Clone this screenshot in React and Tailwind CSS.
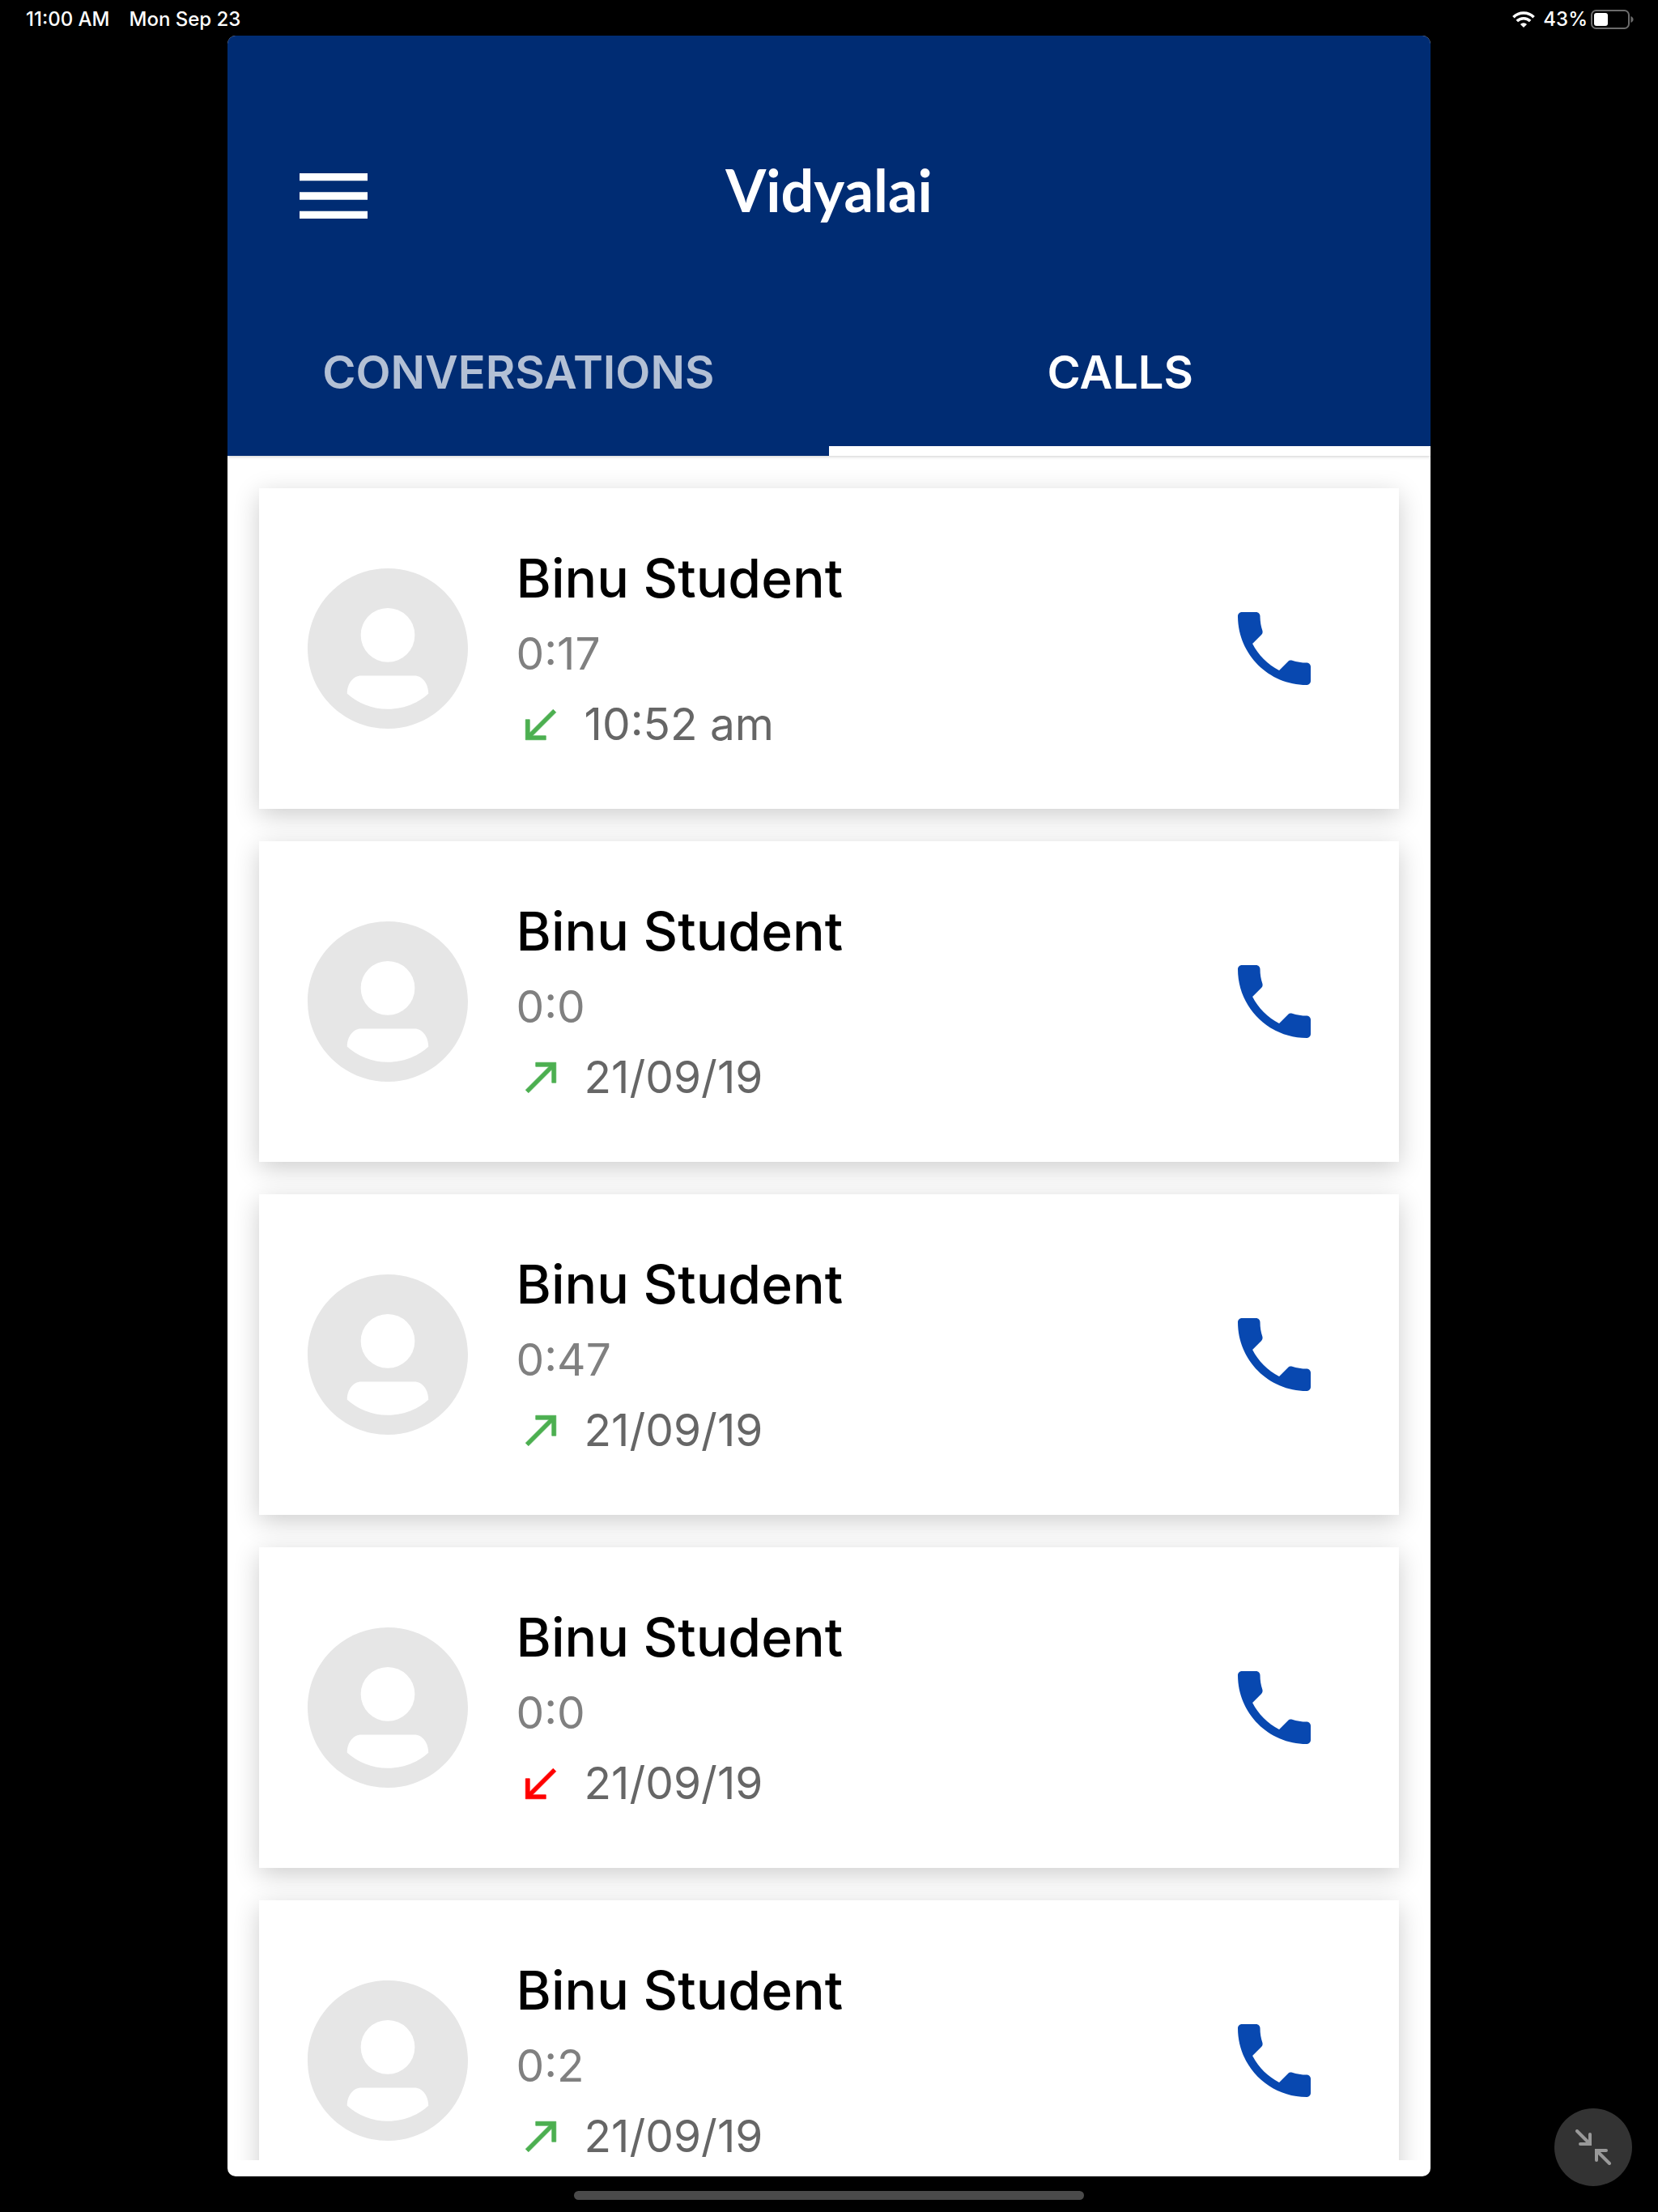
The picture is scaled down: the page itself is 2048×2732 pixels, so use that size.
import { useState } from 'react'

const CALLS = [
  { id: 1, name: 'Binu Student', duration: '0:17', when: '10:52 am', type: 'incoming' },
  { id: 2, name: 'Binu Student', duration: '0:0',  when: '21/09/19', type: 'outgoing' },
  { id: 3, name: 'Binu Student', duration: '0:47', when: '21/09/19', type: 'outgoing' },
  { id: 4, name: 'Binu Student', duration: '0:0',  when: '21/09/19', type: 'missed' },
  { id: 5, name: 'Binu Student', duration: '0:2',  when: '21/09/19', type: 'outgoing' },
]

const TABS = ['Conversations', 'Calls']

function WifiIcon() {
  return (
    <svg viewBox="0 0 28 20" className="w-7 h-5" fill="none" stroke="currentColor" aria-hidden="true">
      <path d="M1.4 7.2a18 18 0 0 1 25.2 0" strokeWidth="3.6" />
      <path d="M5.8 12a11.8 11.8 0 0 1 16.4 0" strokeWidth="3.6" />
      <path d="M14 20l-4.1-4.1a5.9 5.9 0 0 1 8.2 0z" fill="currentColor" stroke="none" />
    </svg>
  )
}

function BatteryIcon() {
  return (
    <svg viewBox="0 0 53 24" className="w-[53px] h-6" aria-hidden="true">
      <rect x="1" y="1" width="46" height="22" rx="5.5" fill="none" stroke="#6b6b6b" strokeWidth="2" />
      <rect x="4" y="4" width="17" height="16" rx="3" fill="#fff" />
      <path d="M49.4 8c4.2 1.6 4.2 6.4 0 8z" fill="#6b6b6b" />
    </svg>
  )
}

function MenuIcon() {
  return (
    <svg viewBox="0 0 24 24" className="w-28 h-28" fill="currentColor" aria-hidden="true">
      <path d="M3 18h18v-2H3v2zm0-5h18v-2H3v2zm0-7v2h18V6H3z" />
    </svg>
  )
}

function Avatar() {
  return (
    <svg viewBox="2 2 20 20" className="w-[198px] h-[198px] flex-shrink-0 text-[#e6e6e6]" fill="currentColor" aria-hidden="true">
      <path d="M12 2C6.48 2 2 6.48 2 12s4.48 10 10 10 10-4.48 10-10S17.52 2 12 2zm0 4.95a3.37 3.37 0 1 1 0 6.74 3.37 3.37 0 0 1 0-6.74zm0 12.6c-2 0-3.8-.76-5.07-1.92 0-1.2.7-2.24 1.77-2.24h6.6c1.07 0 1.77 1.04 1.77 2.24-1.27 1.16-3.07 1.92-5.07 1.92z" />
    </svg>
  )
}

function PhoneIcon() {
  return (
    <svg viewBox="3 3 18 18" className="w-[90px] h-[90px]" fill="currentColor" aria-hidden="true">
      <path d="M6.62 10.79c1.44 2.83 3.76 5.14 6.59 6.59l2.2-2.2c.27-.27.67-.36 1.02-.24 1.12.37 2.33.57 3.57.57.55 0 1 .45 1 1V20c0 .55-.45 1-1 1-9.39 0-17-7.61-17-17 0-.55.45-1 1-1h3.5c.55 0 1 .45 1 1 0 1.25.2 2.45.57 3.57.11.35.03.74-.25 1.02l-2.2 2.2z" />
    </svg>
  )
}

function CallTypeIcon({ type }) {
  if (type === 'outgoing') return (
    <svg viewBox="-0.5 0.5 24 24" className="w-[60px] h-[60px] text-[#4caf50]" fill="currentColor" stroke="currentColor" strokeWidth="0.3" role="img" aria-label="Outgoing call">
      <path d="M9 5v2h6.59L4 18.59 5.41 20 17 8.41V15h2V5z" />
    </svg>
  )

  return (
    <svg
      viewBox="0.5 -0.5 24 24"
      className={type === 'missed' ? 'w-[60px] h-[60px] text-[#ff0000]' : 'w-[60px] h-[60px] text-[#4caf50]'}
      fill="currentColor"
      stroke="currentColor"
      strokeWidth="0.3"
      role="img"
      aria-label={type === 'missed' ? 'Missed call' : 'Incoming call'}
    >
      <path d="M20 5.41L18.59 4 7 15.59V9H5v10h10v-2H8.41z" />
    </svg>
  )
}

function StatusBar() {
  return (
    <div className="h-11 flex-shrink-0 flex items-center justify-between pl-8 pr-[30px] pt-1 text-white text-2xl font-medium">
      <div className="flex gap-6">
        <span>11:00 AM</span>
        <span>Mon Sep 23</span>
      </div>
      <div className="flex items-center">
        <WifiIcon />
        <span className="ml-2.5 mr-1">43%</span>
        <BatteryIcon />
      </div>
    </div>
  )
}

function CallCard({ call }) {
  return (
    <li className="h-[396px] flex-shrink-0 flex items-center pl-[60px] pr-[109px] bg-white shadow-[0_8px_30px_rgba(0,0,0,0.2)]">
      <Avatar />
      <div className="ml-[60px] flex-1 min-w-0">
        <p className="text-[66px] leading-[100px] font-medium text-black truncate">{call.name}</p>
        <p className="text-[55px] leading-[87px] text-[#808080]">{call.duration}</p>
        <div className="flex items-center gap-6 text-[55px] leading-[87px] text-[#666666]">
          <CallTypeIcon type={call.type} />
          <span>{call.when}</span>
        </div>
      </div>
      <button type="button" aria-label={`Call ${call.name}`} className="text-[#0848b0]">
        <PhoneIcon />
      </button>
    </li>
  )
}

export default function App() {
  const [tab, setTab] = useState('Calls')

  return (
    <div className="h-screen flex flex-col bg-black font-['Inter',sans-serif] overflow-hidden">
      <StatusBar />

      <main className="w-[72.6%] mx-auto flex-1 min-h-0 flex flex-col bg-white rounded-[10px] overflow-hidden pb-5">
        <header className="relative z-10 flex-shrink-0 bg-[#002c73] text-white shadow-[0_1px_4px_rgba(0,0,0,0.2)]">
          <div className="grid grid-cols-3 pt-[142px] px-[75px]">
            <button type="button" aria-label="Menu" className="justify-self-start">
              <MenuIcon />
            </button>
            <h1 className="justify-self-center font-['Lato',sans-serif] text-[72px] leading-[96px] font-bold">Vidyalai</h1>
          </div>
          <div role="tablist" className="grid grid-cols-2 pt-[59px]">
            {TABS.map(t => (
              <button
                key={t}
                type="button"
                role="tab"
                aria-selected={tab === t}
                onClick={() => setTab(t)}
                className={
                  tab === t
                    ? 'h-[206px] pt-3 pr-6 border-b-12 border-white uppercase text-[56px] font-semibold text-white'
                    : 'h-[206px] pt-3 pr-6 border-b-12 border-transparent uppercase text-[56px] font-semibold text-white/70'
                }
              >
                {t}
              </button>
            ))}
          </div>
        </header>

        <ul className="flex-1 min-h-0 overflow-hidden flex flex-col gap-10 pt-10 px-[39px]">
          {CALLS.map(c => <CallCard key={c.id} call={c} />)}
        </ul>
      </main>

      <footer className="flex-shrink-0 h-11 flex justify-center pt-[18px]">
        <div className="w-[30.8%] h-[11px] rounded-full bg-[#4a4a4a]" />
      </footer>

      <button
        type="button"
        aria-label="Exit full screen"
        className="fixed right-8 bottom-8 w-24 h-24 rounded-full bg-[#333333] text-[#999999] flex items-center justify-center"
      >
        <svg viewBox="0 0 44 44" className="w-11 h-11" fill="none" stroke="currentColor" strokeWidth="4" strokeLinecap="round" strokeLinejoin="miter" aria-hidden="true">
          <path d="M2 2l16 16M18 6v12H6" />
          <path d="M42 42L26 26M26 38V26h12" />
        </svg>
      </button>
    </div>
  )
}
